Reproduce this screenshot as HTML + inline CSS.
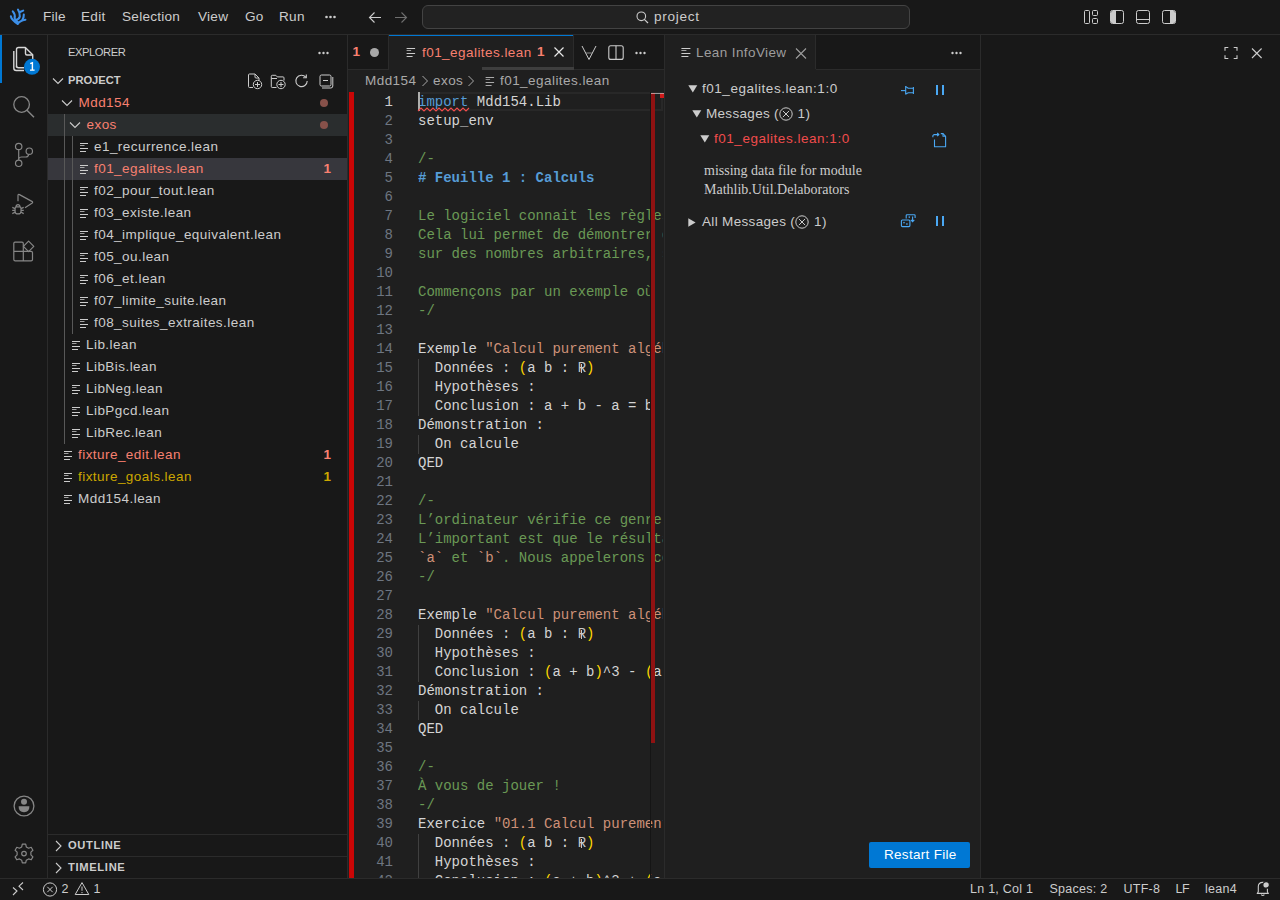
<!DOCTYPE html>
<html><head><meta charset="utf-8">
<style>
*{margin:0;padding:0;box-sizing:border-box}
html,body{width:1280px;height:900px;overflow:hidden;background:#181818;color:#cccccc;font-family:"Liberation Sans",sans-serif;font-size:13px}
.a{position:absolute}
.t{position:absolute;white-space:pre;line-height:1}
svg{position:absolute;overflow:visible}
.mono{font-family:"Liberation Mono",monospace;font-size:14px}
.ui{font-size:13.6px;letter-spacing:0.25px}

.code{position:absolute;left:418px;top:92.8px;width:244.5px;height:786px;overflow:hidden;font-family:"Liberation Mono",monospace;font-size:14px;line-height:19px;color:#d4d4d4;white-space:pre}
.code div{position:relative;height:19px}
.lnum{position:absolute;left:353px;top:92.8px;width:40px;text-align:right;font-family:"Liberation Mono",monospace;font-size:14px;line-height:19px;color:#6e7681}
.lnum .cur{color:#cccccc}
.c{color:#6a9955}.s{color:#ce9178}.k{color:#569cd6}.b{color:#ffd700}.h{color:#569cd6;font-weight:bold}
.rr{position:relative;color:#c8c8c8}
.rr::after{content:"";position:absolute;left:3.5px;top:4.1px;width:1px;height:9.1px;background:#c8c8c8}
.ig{position:absolute;left:0;top:0;width:1px;height:19px;background:#404040}
</style></head><body>
<!-- title bar -->
<div class="a" style="left:0;top:0;width:1280px;height:34px;background:#181818"></div>
<div class="a" style="left:0;top:34px;width:1280px;height:1px;background:#2b2b2b"></div>


<!-- title content -->
<svg style="left:0;top:0" width="40" height="34" viewBox="0 0 40 34">
 <g fill="none" stroke="#3d8fe8" stroke-width="2.1" stroke-linecap="round" stroke-linejoin="round">
  <path d="M10.9 16.4 C11.3 19.8 14.5 21.8 17.7 23.8"/>
  <path d="M17.7 23.8 C19 21.5 22 20.3 25.4 19.7"/>
  <path d="M12.8 11.4 C14.6 13.4 15.2 15.8 14.6 18.2 C14.8 20 16.5 21 17.7 22"/>
  <path d="M18 9.6 C19.4 11.5 20 14 19.8 16.5 C19.4 18.8 17.5 19.6 15.5 20.2"/>
  <path d="M20 12 L23.2 10.6"/>
  <path d="M23.8 14.6 C23.9 16.6 23.5 18.2 22.3 20"/>
 </g>
</svg>
<span class="t ui" style="left:43px;top:10px">File</span>
<span class="t ui" style="left:81px;top:10px">Edit</span>
<span class="t ui" style="left:122px;top:10px">Selection</span>
<span class="t ui" style="left:198px;top:10px">View</span>
<span class="t ui" style="left:245px;top:10px">Go</span>
<span class="t ui" style="left:279px;top:10px">Run</span>
<svg style="left:325px;top:15px" width="12" height="4"><circle cx="1.5" cy="2" r="1.3" fill="#ccc"/><circle cx="5.5" cy="2" r="1.3" fill="#ccc"/><circle cx="9.5" cy="2" r="1.3" fill="#ccc"/></svg>
<svg style="left:368px;top:11px" width="14" height="13" viewBox="0 0 14 13"><path d="M13 6.5H1.5M6.5 1.5L1.5 6.5L6.5 11.5" fill="none" stroke="#cccccc" stroke-width="1.1"/></svg>
<svg style="left:394px;top:11px" width="14" height="13" viewBox="0 0 14 13"><path d="M1 6.5H12.5M7.5 1.5L12.5 6.5L7.5 11.5" fill="none" stroke="#6f6f6f" stroke-width="1.1"/></svg>
<div class="a" style="left:422px;top:5px;width:488px;height:24px;border:1px solid #434343;border-radius:6px;background:#222222"></div>
<svg style="left:636px;top:11px" width="13" height="13" viewBox="0 0 13 13"><circle cx="5.3" cy="5.3" r="4.3" fill="none" stroke="#cccccc" stroke-width="1.1"/><path d="M8.3 8.3L12 12" stroke="#cccccc" stroke-width="1.2"/></svg>
<span class="t ui" style="left:654px;top:9.5px;letter-spacing:0.7px">project</span>
<svg style="left:1084px;top:10px" width="14" height="14" viewBox="0 0 14 14" fill="none" stroke="#cccccc" stroke-width="1"><rect x="0.5" y="0.5" width="5" height="13" rx="1"/><rect x="8.5" y="0.5" width="5" height="5" rx="1"/><rect x="8.5" y="8.5" width="5" height="5" rx="1"/></svg>
<svg style="left:1110px;top:10px" width="14" height="14" viewBox="0 0 14 14"><rect x="0.5" y="0.5" width="13" height="13" rx="2" fill="none" stroke="#cccccc"/><path d="M1 2.5 Q1 1 2.5 1 H6 V13 H2.5 Q1 13 1 11.5Z" fill="#cccccc"/></svg>
<svg style="left:1136px;top:10px" width="14" height="14" viewBox="0 0 14 14" fill="none" stroke="#cccccc"><rect x="0.5" y="0.5" width="13" height="13" rx="2"/><path d="M1 9.5H13"/></svg>
<svg style="left:1162px;top:10px" width="14" height="14" viewBox="0 0 14 14"><rect x="0.5" y="0.5" width="13" height="13" rx="2" fill="none" stroke="#cccccc"/><path d="M8 1 H11.5 Q13 1 13 2.5 V11.5 Q13 13 11.5 13 H8Z" fill="#cccccc"/></svg>

<!-- activity bar -->
<div class="a" style="left:0;top:35px;width:47px;height:843px;background:#181818"></div>
<div class="a" style="left:47px;top:35px;width:1px;height:843px;background:#2b2b2b"></div>
<div class="a" style="left:0;top:35px;width:2px;height:48px;background:#0078d4"></div>


<!-- activity icons -->
<svg style="left:0;top:35px" width="48" height="48" viewBox="0 35 48 48">
 <g fill="none" stroke="#d7d7d7" stroke-width="1.4" stroke-linejoin="round">
  <path d="M16.5 67.5 V49.5 Q16.5 47.5 18.5 47.5 H25.3 L32.7 54.8 V60"/>
  <path d="M25.5 47.8 V53.5 Q25.5 55 27 55 H32.5"/>
  <path d="M24 67.7 H18.5 Q16.5 67.7 16.5 65.7"/>
  <path d="M13.8 51 V68 Q13.8 70.5 16.3 70.5 H24"/>
 </g>
 <circle cx="32" cy="66.8" r="8" fill="#0078d4"/>
 <path d="M30.2 63.6 L32.4 62.8 V70 M30 70.1 H34.6" fill="none" stroke="#fff" stroke-width="1.4"/>
</svg>
<svg style="left:0;top:83px" width="48" height="48" viewBox="0 83 48 48" fill="none" stroke="#868686" stroke-width="1.3">
 <circle cx="21.6" cy="104.5" r="7.8"/>
 <path d="M26.5 109.8 L34 117.3" stroke-width="1.5"/>
</svg>
<svg style="left:0;top:131px" width="48" height="48" viewBox="0 131 48 48" fill="none" stroke="#868686" stroke-width="1.2">
 <circle cx="18.7" cy="146.5" r="3.2"/>
 <circle cx="29.3" cy="151.2" r="3.2"/>
 <circle cx="18.7" cy="163.3" r="3.2"/>
 <path d="M18.7 149.7 V160.1"/>
 <path d="M18.7 158.5 Q19.5 157 21.5 157 H26 Q28.3 157 28.8 154.4"/>
</svg>
<svg style="left:0;top:179px" width="48" height="48" viewBox="0 179 48 48" fill="none" stroke="#868686" stroke-width="1.2" stroke-linejoin="round">
 <path d="M18 201.3 V195.5 Q18 194 19.5 194.6 L32.3 201.6 Q33 202.4 32.3 203 L25 207.7"/>
 <path d="M15.1 213 V208.6 Q15.1 206.9 16.5 206.9 H19.6 Q21 206.9 21 208.6 V211.4 Q21 213.9 18 213.9 Q15.1 213.9 15.1 211.4Z"/>
 <path d="M16 206.9 Q16.2 204.6 18 204.6 Q19.8 204.6 20 206.9"/>
 <path d="M12.3 207.4 L15 208.6 M12.2 210.3 H15 M12.3 213.6 L15.2 212 M23.7 207.4 L21 208.6 M23.8 210.3 H21 M23.7 213.6 L20.8 212"/>
</svg>
<svg style="left:0;top:227px" width="48" height="48" viewBox="0 227 48 48" fill="none" stroke="#868686" stroke-width="1.2" stroke-linejoin="round">
 <path d="M23.3 251.4 V243.5 Q23.3 242.2 22 242.2 H15 Q13.8 242.2 13.8 243.5 V259.5 Q13.8 260.9 15.2 260.9 H31.1 Q32.5 260.9 32.5 259.5 V252.8 Q32.5 251.4 31.1 251.4 H13.8"/>
 <path d="M23.3 260.9 V251.4"/>
 <path d="M28.6 241.2 L33.8 246.4 L28.6 251.6 L23.4 246.4Z"/>
</svg>
<svg style="left:0;top:782px" width="48" height="48" viewBox="0 782 48 48">
 <circle cx="24" cy="806" r="9.9" fill="none" stroke="#868686" stroke-width="1.3"/>
 <circle cx="24" cy="801.7" r="3" fill="#868686"/>
 <path d="M18.6 806.3 H29.4 Q29.4 812.2 24 812.2 Q18.6 812.2 18.6 806.3Z" fill="#868686"/>
</svg>
<svg style="left:0;top:830px" width="48" height="48" viewBox="0 830 48 48" fill="none" stroke="#868686" stroke-width="1.2" stroke-linejoin="round">
 <path d="M22.3 844.2 H25.7 L26.3 846.9 L28.6 848.2 L31.2 847.3 L32.9 850.2 L30.9 852.1 V854.9 L32.9 856.9 L31.2 859.8 L28.6 858.9 L26.3 860.2 L25.7 862.9 H22.3 L21.7 860.2 L19.4 858.9 L16.8 859.8 L15.1 856.9 L17.1 854.9 V852.1 L15.1 850.2 L16.8 847.3 L19.4 848.2 L21.7 846.9Z"/>
 <circle cx="24" cy="853.6" r="2.3"/>
</svg>

<!-- sidebar -->
<div class="a" style="left:48px;top:35px;width:299px;height:843px;background:#181818"></div>
<div class="a" style="left:347px;top:35px;width:1px;height:843px;background:#2b2b2b"></div>

<!-- sidebar content -->
<span class="t" style="left:68px;top:46.5px;font-size:11.2px;letter-spacing:-0.45px;color:#cccccc">EXPLORER</span>
<svg style="left:318px;top:51px" width="12" height="4"><circle cx="1.5" cy="2" r="1.2" fill="#ccc"/><circle cx="5.5" cy="2" r="1.2" fill="#ccc"/><circle cx="9.5" cy="2" r="1.2" fill="#ccc"/></svg>
<svg style="left:52.3px;top:75.5px" width="12" height="10" viewBox="0 0 12 10"><path d="M1 2.5 L6 7.5 L11 2.5" fill="none" stroke="#cccccc" stroke-width="1.1"/></svg>
<span class="t" style="left:68px;top:74.5px;font-size:11.2px;font-weight:bold;letter-spacing:-0.05px;color:#cccccc">PROJECT</span>
<div class="a" style="left:48px;top:114px;width:299px;height:22px;background:#2a2d2e"></div>
<div class="a" style="left:48px;top:158px;width:299px;height:22px;background:#37373d"></div>
<div class="a" style="left:64px;top:114px;width:1px;height:330px;background:#585858"></div>
<div class="a" style="left:72px;top:136px;width:1px;height:198px;background:#585858"></div>
<svg style="left:61.2px;top:98.0px" width="12" height="10" viewBox="0 0 12 10"><path d="M1 2.5 L6 7.5 L11 2.5" fill="none" stroke="#cccccc" stroke-width="1.1"/></svg>
<span class="t" style="left:78.5px;top:95.6px;font-size:13.5px;letter-spacing:0.45px;color:#f88070">Mdd154</span>
<div class="a" style="left:320px;top:99px;width:8px;height:8px;border-radius:50%;background:#87514a"></div>
<svg style="left:69.2px;top:120.0px" width="12" height="10" viewBox="0 0 12 10"><path d="M1 2.5 L6 7.5 L11 2.5" fill="none" stroke="#cccccc" stroke-width="1.1"/></svg>
<span class="t" style="left:86.5px;top:117.6px;font-size:13.5px;letter-spacing:0.45px;color:#f88070">exos</span>
<div class="a" style="left:320px;top:121px;width:8px;height:8px;border-radius:50%;background:#87514a"></div>
<svg style="left:80px;top:136px" width="10" height="22" viewBox="0 0 10 22" fill="#cccccc"><rect x="0" y="7" width="8" height="1"/><rect x="0" y="9" width="4.5" height="1" opacity="0.75"/><rect x="0" y="12" width="8" height="1"/><rect x="0" y="15" width="6" height="1"/></svg>
<span class="t" style="left:94px;top:139.6px;font-size:13.5px;letter-spacing:0.45px;color:#cccccc">e1_recurrence.lean</span>
<svg style="left:80px;top:158px" width="10" height="22" viewBox="0 0 10 22" fill="#cccccc"><rect x="0" y="7" width="8" height="1"/><rect x="0" y="9" width="4.5" height="1" opacity="0.75"/><rect x="0" y="12" width="8" height="1"/><rect x="0" y="15" width="6" height="1"/></svg>
<span class="t" style="left:94px;top:161.6px;font-size:13.5px;letter-spacing:0.45px;color:#f88070">f01_egalites.lean</span>
<span class="t" style="left:323.5px;top:161.6px;font-size:13.5px;font-weight:bold;color:#f88070">1</span>
<svg style="left:80px;top:180px" width="10" height="22" viewBox="0 0 10 22" fill="#cccccc"><rect x="0" y="7" width="8" height="1"/><rect x="0" y="9" width="4.5" height="1" opacity="0.75"/><rect x="0" y="12" width="8" height="1"/><rect x="0" y="15" width="6" height="1"/></svg>
<span class="t" style="left:94px;top:183.6px;font-size:13.5px;letter-spacing:0.45px;color:#cccccc">f02_pour_tout.lean</span>
<svg style="left:80px;top:202px" width="10" height="22" viewBox="0 0 10 22" fill="#cccccc"><rect x="0" y="7" width="8" height="1"/><rect x="0" y="9" width="4.5" height="1" opacity="0.75"/><rect x="0" y="12" width="8" height="1"/><rect x="0" y="15" width="6" height="1"/></svg>
<span class="t" style="left:94px;top:205.6px;font-size:13.5px;letter-spacing:0.45px;color:#cccccc">f03_existe.lean</span>
<svg style="left:80px;top:224px" width="10" height="22" viewBox="0 0 10 22" fill="#cccccc"><rect x="0" y="7" width="8" height="1"/><rect x="0" y="9" width="4.5" height="1" opacity="0.75"/><rect x="0" y="12" width="8" height="1"/><rect x="0" y="15" width="6" height="1"/></svg>
<span class="t" style="left:94px;top:227.6px;font-size:13.5px;letter-spacing:0.45px;color:#cccccc">f04_implique_equivalent.lean</span>
<svg style="left:80px;top:246px" width="10" height="22" viewBox="0 0 10 22" fill="#cccccc"><rect x="0" y="7" width="8" height="1"/><rect x="0" y="9" width="4.5" height="1" opacity="0.75"/><rect x="0" y="12" width="8" height="1"/><rect x="0" y="15" width="6" height="1"/></svg>
<span class="t" style="left:94px;top:249.6px;font-size:13.5px;letter-spacing:0.45px;color:#cccccc">f05_ou.lean</span>
<svg style="left:80px;top:268px" width="10" height="22" viewBox="0 0 10 22" fill="#cccccc"><rect x="0" y="7" width="8" height="1"/><rect x="0" y="9" width="4.5" height="1" opacity="0.75"/><rect x="0" y="12" width="8" height="1"/><rect x="0" y="15" width="6" height="1"/></svg>
<span class="t" style="left:94px;top:271.6px;font-size:13.5px;letter-spacing:0.45px;color:#cccccc">f06_et.lean</span>
<svg style="left:80px;top:290px" width="10" height="22" viewBox="0 0 10 22" fill="#cccccc"><rect x="0" y="7" width="8" height="1"/><rect x="0" y="9" width="4.5" height="1" opacity="0.75"/><rect x="0" y="12" width="8" height="1"/><rect x="0" y="15" width="6" height="1"/></svg>
<span class="t" style="left:94px;top:293.6px;font-size:13.5px;letter-spacing:0.45px;color:#cccccc">f07_limite_suite.lean</span>
<svg style="left:80px;top:312px" width="10" height="22" viewBox="0 0 10 22" fill="#cccccc"><rect x="0" y="7" width="8" height="1"/><rect x="0" y="9" width="4.5" height="1" opacity="0.75"/><rect x="0" y="12" width="8" height="1"/><rect x="0" y="15" width="6" height="1"/></svg>
<span class="t" style="left:94px;top:315.6px;font-size:13.5px;letter-spacing:0.45px;color:#cccccc">f08_suites_extraites.lean</span>
<svg style="left:72px;top:334px" width="10" height="22" viewBox="0 0 10 22" fill="#cccccc"><rect x="0" y="7" width="8" height="1"/><rect x="0" y="9" width="4.5" height="1" opacity="0.75"/><rect x="0" y="12" width="8" height="1"/><rect x="0" y="15" width="6" height="1"/></svg>
<span class="t" style="left:86px;top:337.6px;font-size:13.5px;letter-spacing:0.45px;color:#cccccc">Lib.lean</span>
<svg style="left:72px;top:356px" width="10" height="22" viewBox="0 0 10 22" fill="#cccccc"><rect x="0" y="7" width="8" height="1"/><rect x="0" y="9" width="4.5" height="1" opacity="0.75"/><rect x="0" y="12" width="8" height="1"/><rect x="0" y="15" width="6" height="1"/></svg>
<span class="t" style="left:86px;top:359.6px;font-size:13.5px;letter-spacing:0.45px;color:#cccccc">LibBis.lean</span>
<svg style="left:72px;top:378px" width="10" height="22" viewBox="0 0 10 22" fill="#cccccc"><rect x="0" y="7" width="8" height="1"/><rect x="0" y="9" width="4.5" height="1" opacity="0.75"/><rect x="0" y="12" width="8" height="1"/><rect x="0" y="15" width="6" height="1"/></svg>
<span class="t" style="left:86px;top:381.6px;font-size:13.5px;letter-spacing:0.45px;color:#cccccc">LibNeg.lean</span>
<svg style="left:72px;top:400px" width="10" height="22" viewBox="0 0 10 22" fill="#cccccc"><rect x="0" y="7" width="8" height="1"/><rect x="0" y="9" width="4.5" height="1" opacity="0.75"/><rect x="0" y="12" width="8" height="1"/><rect x="0" y="15" width="6" height="1"/></svg>
<span class="t" style="left:86px;top:403.6px;font-size:13.5px;letter-spacing:0.45px;color:#cccccc">LibPgcd.lean</span>
<svg style="left:72px;top:422px" width="10" height="22" viewBox="0 0 10 22" fill="#cccccc"><rect x="0" y="7" width="8" height="1"/><rect x="0" y="9" width="4.5" height="1" opacity="0.75"/><rect x="0" y="12" width="8" height="1"/><rect x="0" y="15" width="6" height="1"/></svg>
<span class="t" style="left:86px;top:425.6px;font-size:13.5px;letter-spacing:0.45px;color:#cccccc">LibRec.lean</span>
<svg style="left:64px;top:444px" width="10" height="22" viewBox="0 0 10 22" fill="#cccccc"><rect x="0" y="7" width="8" height="1"/><rect x="0" y="9" width="4.5" height="1" opacity="0.75"/><rect x="0" y="12" width="8" height="1"/><rect x="0" y="15" width="6" height="1"/></svg>
<span class="t" style="left:78px;top:447.6px;font-size:13.5px;letter-spacing:0.45px;color:#f88070">fixture_edit.lean</span>
<span class="t" style="left:323.5px;top:447.6px;font-size:13.5px;font-weight:bold;color:#f88070">1</span>
<svg style="left:64px;top:466px" width="10" height="22" viewBox="0 0 10 22" fill="#cccccc"><rect x="0" y="7" width="8" height="1"/><rect x="0" y="9" width="4.5" height="1" opacity="0.75"/><rect x="0" y="12" width="8" height="1"/><rect x="0" y="15" width="6" height="1"/></svg>
<span class="t" style="left:78px;top:469.6px;font-size:13.5px;letter-spacing:0.45px;color:#cca700">fixture_goals.lean</span>
<span class="t" style="left:323.5px;top:469.6px;font-size:13.5px;font-weight:bold;color:#cca700">1</span>
<svg style="left:64px;top:488px" width="10" height="22" viewBox="0 0 10 22" fill="#cccccc"><rect x="0" y="7" width="8" height="1"/><rect x="0" y="9" width="4.5" height="1" opacity="0.75"/><rect x="0" y="12" width="8" height="1"/><rect x="0" y="15" width="6" height="1"/></svg>
<span class="t" style="left:78px;top:491.6px;font-size:13.5px;letter-spacing:0.45px;color:#cccccc">Mdd154.lean</span>
<svg style="left:246px;top:72px" width="18" height="18" viewBox="0 0 18 18" fill="none" stroke="#cccccc" stroke-width="1">
 <path d="M7 15.5 H3.5 Q2.5 15.5 2.5 14.5 V3 Q2.5 2 3.5 2 H9 L13 6 V8.5"/><path d="M9 2.2 V5 Q9 6 10 6 H12.8"/>
 <circle cx="11.5" cy="12.5" r="4.2" fill="#181818"/><path d="M11.5 10 V15 M9 12.5 H14"/></svg>
<svg style="left:269px;top:72px" width="18" height="18" viewBox="0 0 18 18" fill="none" stroke="#cccccc" stroke-width="1">
 <path d="M7.5 15.5 H3.2 Q2.3 15.5 2.3 14.5 V4.3 Q2.3 3.3 3.3 3.3 H6.8 L8.3 4.9 H14 Q15 4.9 15 5.9 V8.5"/><path d="M2.5 6.5 H8"/>
 <circle cx="12" cy="12.5" r="4.2" fill="#181818"/><path d="M12 10 V15 M9.5 12.5 H14.5"/></svg>
<svg style="left:292.5px;top:72px" width="18" height="18" viewBox="0 0 18 18" fill="none" stroke="#cccccc" stroke-width="1.1">
 <path d="M12.8 5.2 A5.7 5.7 0 1 0 14.2 9"/><path d="M13.3 2.6 V5.8 H10.1"/></svg>
<svg style="left:317.5px;top:72px" width="18" height="18" viewBox="0 0 18 18" fill="none" stroke="#cccccc" stroke-width="1">
 <rect x="2" y="3" width="11" height="11" rx="1.5"/><path d="M5 8.5 H10"/><path d="M4 16 H12.8 Q14.8 16 14.8 14 V5"/></svg>
<div class="a" style="left:48px;top:834px;width:299px;height:1px;background:#2b2b2b"></div>
<div class="a" style="left:48px;top:856px;width:299px;height:1px;background:#2b2b2b"></div>
<svg style="left:53px;top:840px" width="10" height="12" viewBox="0 0 10 12"><path d="M3 1 L8 6 L3 11" fill="none" stroke="#cccccc" stroke-width="1.1"/></svg>
<span class="t" style="left:68px;top:839.8px;font-size:11.2px;font-weight:bold;letter-spacing:0.62px;color:#cccccc">OUTLINE</span>
<svg style="left:53px;top:862px" width="10" height="12" viewBox="0 0 10 12"><path d="M3 1 L8 6 L3 11" fill="none" stroke="#cccccc" stroke-width="1.1"/></svg>
<span class="t" style="left:68px;top:861.8px;font-size:11.2px;font-weight:bold;letter-spacing:0.66px;color:#cccccc">TIMELINE</span>

<!-- editor group -->
<div class="a" style="left:348px;top:35px;width:316px;height:843px;background:#1f1f1f"></div>
<div class="a" style="left:348px;top:35px;width:316px;height:34px;background:#181818"></div>
<div class="a" style="left:348px;top:69px;width:316px;height:1px;background:#2b2b2b"></div>
<div class="a" style="left:664px;top:35px;width:1px;height:843px;background:#2b2b2b"></div>

<!-- editor content -->
<div class="a" style="left:388px;top:35px;width:1px;height:35px;background:#2b2b2b"></div>
<span class="t" style="left:352.5px;top:44.8px;font-size:13.5px;font-weight:bold;color:#f88070">1</span>
<div class="a" style="left:369.8px;top:48.3px;width:9px;height:9px;border-radius:50%;background:#a8a8a8"></div>
<div class="a" style="left:389px;top:35px;width:184px;height:35px;background:#1f1f1f"></div><div class="a" style="left:573px;top:35px;width:1px;height:35px;background:#2b2b2b"></div>
<div class="a" style="left:389px;top:35px;width:184px;height:1px;background:#0078d4"></div>
<svg style="left:406px;top:40px" width="10" height="22" viewBox="0 0 10 22" fill="#cccccc"><rect x="0.6" y="8" width="8.5" height="1"/><rect x="0.6" y="10" width="4.5" height="1" opacity="0.75"/><rect x="0.6" y="13" width="8.5" height="1"/><rect x="0.6" y="16" width="6" height="1"/></svg>
<span class="t" style="left:422px;top:46.4px;font-size:13.5px;letter-spacing:0.45px;color:#f88070">f01_egalites.lean</span>
<span class="t" style="left:537px;top:45.2px;font-size:13.5px;font-weight:bold;color:#f88070">1</span>
<svg style="left:553px;top:46px" width="12" height="12" viewBox="0 0 12 12"><path d="M1.5 1.5 L10.5 10.5 M10.5 1.5 L1.5 10.5" stroke="#e8e8e8" stroke-width="1.2"/></svg>
<div class="a" style="left:482px;top:67px;width:92px;height:3px;background:#3e3e3e"></div>
<svg style="left:581px;top:45px" width="16" height="16" viewBox="0 0 16 16" fill="none" stroke="#cccccc" stroke-width="1"><path d="M1 1 L8 14.5 L15 1"/><path d="M5.2 8 H10.8" stroke-width="1.1" stroke-opacity="0.6"/></svg>
<svg style="left:608px;top:45px" width="16" height="16" viewBox="0 0 16 16" fill="none" stroke="#cccccc" stroke-width="1.1"><rect x="0.8" y="0.8" width="14.4" height="13.6" rx="2"/><path d="M8 0.8 V14.4"/></svg>
<svg style="left:635px;top:51px" width="12" height="4"><circle cx="1.5" cy="2" r="1.2" fill="#ccc"/><circle cx="5.5" cy="2" r="1.2" fill="#ccc"/><circle cx="9.5" cy="2" r="1.2" fill="#ccc"/></svg>
<span class="t" style="left:365px;top:74px;font-size:13.5px;letter-spacing:0.45px;color:#a9a9a9">Mdd154</span>
<svg style="left:421px;top:74px" width="8" height="14" viewBox="0 0 8 14"><path d="M1.5 2 L6.5 7 L1.5 12" fill="none" stroke="#a9a9a9" stroke-width="1"/></svg>
<span class="t" style="left:433px;top:74px;font-size:13.5px;letter-spacing:0.45px;color:#a9a9a9">exos</span>
<svg style="left:467px;top:74px" width="8" height="14" viewBox="0 0 8 14"><path d="M1.5 2 L6.5 7 L1.5 12" fill="none" stroke="#a9a9a9" stroke-width="1"/></svg>
<svg style="left:485px;top:69px" width="10" height="22" viewBox="0 0 10 22" fill="#a9a9a9"><rect x="0.6" y="8" width="8.5" height="1"/><rect x="0.6" y="10" width="4.5" height="1" opacity="0.75"/><rect x="0.6" y="13" width="8.5" height="1"/><rect x="0.6" y="16" width="6" height="1"/></svg>
<span class="t" style="left:500px;top:74px;font-size:13.5px;letter-spacing:0.45px;color:#a9a9a9">f01_egalites.lean</span>
<div class="a" style="left:349px;top:92px;width:4.5px;height:786px;background:#ca0606"></div>


<!-- code -->
<div class="a" style="left:418px;top:92px;width:245px;height:19px;border:2px solid #282828"></div>
<div class="lnum"><div class="cur">1</div><div>2</div><div>3</div><div>4</div><div>5</div><div>6</div><div>7</div><div>8</div><div>9</div><div>10</div><div>11</div><div>12</div><div>13</div><div>14</div><div>15</div><div>16</div><div>17</div><div>18</div><div>19</div><div>20</div><div>21</div><div>22</div><div>23</div><div>24</div><div>25</div><div>26</div><div>27</div><div>28</div><div>29</div><div>30</div><div>31</div><div>32</div><div>33</div><div>34</div><div>35</div><div>36</div><div>37</div><div>38</div><div>39</div><div>40</div><div>41</div><div>42</div></div>
<div class="code"><div><span class="k">import</span> Mdd154.Lib</div><div>setup_env</div><div>&nbsp;</div><div><span class="c">/-</span></div><div><span class="h"># Feuille 1 : Calculs</span></div><div>&nbsp;</div><div><span class="c">Le logiciel connait les règles de calcul</span></div><div><span class="c">Cela lui permet de démontrer des égalités</span></div><div><span class="c">sur des nombres arbitraires, sans</span></div><div>&nbsp;</div><div><span class="c">Commençons par un exemple où la</span></div><div><span class="c">-/</span></div><div>&nbsp;</div><div>Exemple <span class="s">"Calcul purement algébrique"</span></div><div><span class="ig"></span>  Données : <span class="b">(</span>a b : <span class="rr">R</span><span class="b">)</span></div><div><span class="ig"></span>  Hypothèses :</div><div><span class="ig"></span>  Conclusion : a + b - a = b</div><div>Démonstration :</div><div><span class="ig"></span>  On calcule</div><div>QED</div><div>&nbsp;</div><div><span class="c">/-</span></div><div><span class="c">L’ordinateur vérifie ce genre de calcul</span></div><div><span class="c">L’important est que le résultat ne dépend</span></div><div><span class="s">`a`</span><span class="c"> et </span><span class="s">`b`</span><span class="c">. Nous appelerons ces</span></div><div><span class="c">-/</span></div><div>&nbsp;</div><div>Exemple <span class="s">"Calcul purement algébrique"</span></div><div><span class="ig"></span>  Données : <span class="b">(</span>a b : <span class="rr">R</span><span class="b">)</span></div><div><span class="ig"></span>  Hypothèses :</div><div><span class="ig"></span>  Conclusion : <span class="b">(</span>a + b<span class="b">)</span>^3 - <span class="b">(</span>a - b<span class="b">)</span>^3</div><div>Démonstration :</div><div><span class="ig"></span>  On calcule</div><div>QED</div><div>&nbsp;</div><div><span class="c">/-</span></div><div><span class="c">À vous de jouer !</span></div><div><span class="c">-/</span></div><div>Exercice <span class="s">"01.1 Calcul purement algébrique"</span></div><div><span class="ig"></span>  Données : <span class="b">(</span>a b : <span class="rr">R</span><span class="b">)</span></div><div><span class="ig"></span>  Hypothèses :</div><div><span class="ig"></span>  Conclusion : <span class="b">(</span>a + b<span class="b">)</span>^3 + <span class="b">(</span>a - b<span class="b">)</span>^3</div></div>
<div class="a" style="left:418px;top:92px;width:2px;height:19px;background:#aeafad"></div>
<svg style="left:418px;top:107px" width="52" height="5" viewBox="0 0 52 5"><path d="M0 4 L3.0 1 L6.0 4 L9.0 1 L12.0 4 L15.0 1 L18.0 4 L21.0 1 L24.0 4 L27.0 1 L30.0 4 L33.0 1 L36.0 4 L39.0 1 L42.0 4 L45.0 1 L48.0 4 L51.0 1" fill="none" stroke="#f14c4c" stroke-width="1.1"/></svg>
<div class="a" style="left:650px;top:92px;width:1px;height:786px;background:#151515"></div>
<div class="a" style="left:651px;top:93px;width:4px;height:650px;background:#8f1212"></div>
<div class="a" style="left:651px;top:93px;width:13px;height:1px;background:#9a9a9a"></div><div class="a" style="left:651px;top:93px;width:4px;height:1px;background:#c89090"></div><div class="a" style="left:660px;top:93px;width:4px;height:1px;background:#c89090"></div>
<div class="a" style="left:660px;top:94px;width:4px;height:4px;background:#cf1a1a"></div>

<!-- infoview group -->
<div class="a" style="left:665px;top:35px;width:315px;height:843px;background:#1f1f1f"></div>
<div class="a" style="left:665px;top:35px;width:315px;height:34px;background:#181818"></div>
<div class="a" style="left:665px;top:69px;width:315px;height:1px;background:#2b2b2b"></div>
<div class="a" style="left:980px;top:35px;width:1px;height:843px;background:#2b2b2b"></div>

<!-- right panel -->
<div class="a" style="left:981px;top:35px;width:299px;height:843px;background:#181818"></div>

<!-- status bar -->
<div class="a" style="left:0;top:878px;width:1280px;height:1px;background:#2b2b2b"></div>
<div class="a" style="left:0;top:879px;width:1280px;height:21px;background:#181818"></div>

<!-- infoview content -->
<div class="a" style="left:665px;top:35px;width:151px;height:34px;background:#1f1f1f"></div>
<div class="a" style="left:665px;top:69px;width:151px;height:1px;background:#1f1f1f"></div>
<div class="a" style="left:815px;top:35px;width:1px;height:34px;background:#2b2b2b"></div>
<svg style="left:681px;top:36px" width="10" height="22" viewBox="0 0 10 22" fill="#cccccc"><rect x="0.4" y="12" width="9" height="1"/><rect x="0.4" y="14" width="5" height="1" opacity="0.75"/><rect x="0.4" y="17" width="9" height="1"/><rect x="0.4" y="20" width="7" height="1"/></svg>
<span class="t" style="left:696px;top:46px;font-size:13.5px;letter-spacing:0.4px;color:#9d9d9d">Lean InfoView</span>
<svg style="left:795px;top:48px" width="12" height="11" viewBox="0 0 12 11"><path d="M1 0.5 L11 10.5 M11 0.5 L1 10.5" stroke="#9d9d9d" stroke-width="1.1"/></svg>
<svg style="left:951px;top:51px" width="12" height="4"><circle cx="1.5" cy="2" r="1.2" fill="#ccc"/><circle cx="5.5" cy="2" r="1.2" fill="#ccc"/><circle cx="9.5" cy="2" r="1.2" fill="#ccc"/></svg>
<svg style="left:687.5px;top:85px" width="10" height="8" viewBox="0 0 10 8"><path d="M0.3 0.3 H9.3 L4.8 7.6Z" fill="#cccccc"/></svg>
<span class="t" style="left:702px;top:81.6px;font-size:13.5px;letter-spacing:0.53px;color:#cccccc">f01_egalites.lean:1:0</span>
<svg style="left:691.5px;top:110px" width="10" height="8" viewBox="0 0 10 8"><path d="M0.3 0.3 H9.3 L4.8 7.6Z" fill="#cccccc"/></svg>
<span class="t" style="left:706px;top:107.3px;font-size:13.5px;letter-spacing:0.31px;color:#cccccc">Messages (</span>
<svg style="left:778.6px;top:107.2px" width="14" height="14" viewBox="0 0 14 14" fill="none" stroke="#cccccc" stroke-width="1"><circle cx="7" cy="7" r="6.2"/><path d="M3.9 3.9 L10.1 10.1 M10.1 3.9 L3.9 10.1"/></svg>
<span class="t" style="left:797.5px;top:107.3px;font-size:13.5px;letter-spacing:0.42px;color:#cccccc">1)</span>
<svg style="left:700px;top:135px" width="10" height="8" viewBox="0 0 10 8"><path d="M0.3 0.3 H9.3 L4.8 7.6Z" fill="#cccccc"/></svg>
<span class="t" style="left:714px;top:131.8px;font-size:13.5px;letter-spacing:0.53px;color:#f14c4c">f01_egalites.lean:1:0</span>
<span class="t" style="left:704px;top:163.5px;font-family:'Liberation Serif',serif;font-size:14px;color:#cccccc">missing data file for module</span>
<span class="t" style="left:704px;top:183.2px;font-family:'Liberation Serif',serif;font-size:14px;color:#cccccc">Mathlib.Util.Delaborators</span>
<svg style="left:688px;top:217.5px" width="8" height="10" viewBox="0 0 8 10"><path d="M0.3 0.3 L7.6 4.5 L0.3 8.7Z" fill="#cccccc"/></svg>
<span class="t" style="left:702px;top:214.8px;font-size:13.5px;letter-spacing:0.33px;color:#cccccc">All Messages (</span>
<svg style="left:794.9px;top:214.6px" width="14" height="14" viewBox="0 0 14 14" fill="none" stroke="#cccccc" stroke-width="1"><circle cx="7" cy="7" r="6.2"/><path d="M3.9 3.9 L10.1 10.1 M10.1 3.9 L3.9 10.1"/></svg>
<span class="t" style="left:814px;top:214.8px;font-size:13.5px;letter-spacing:0.42px;color:#cccccc">1)</span>
<svg style="left:900px;top:84px" width="16" height="12" viewBox="0 0 16 12" fill="none" stroke="#4aa8f4" stroke-width="1.1" stroke-linejoin="round"><path d="M1 6.6 H5.7"/><path d="M5.7 2.1 V10.6"/><path d="M5.7 2.6 L8.3 4.3 H13.4 M5.7 10.1 L8.3 8.8 H13.4"/><path d="M13.4 3 V10.1"/></svg>
<div class="a" style="left:936px;top:85px;width:2.2px;height:10px;background:#4aa8f4"></div>
<div class="a" style="left:941.9px;top:85px;width:2.2px;height:10px;background:#4aa8f4"></div>
<div class="a" style="left:936px;top:216px;width:2.2px;height:10.3px;background:#4aa8f4"></div>
<div class="a" style="left:941.9px;top:216px;width:2.2px;height:10.3px;background:#4aa8f4"></div>
<svg style="left:931px;top:132px" width="16" height="16" viewBox="0 0 16 16" fill="none" stroke="#4aa8f4" stroke-width="1.1" stroke-linejoin="round"><path d="M3.5 7.5 V14.8 H14.6 V4.3 L12 1.6 H9.8"/><path d="M12 1.6 V4.3 H14.6"/><path d="M2.2 5.3 Q1 3.5 3.2 2.6 H7.8 M6.2 1 L7.9 2.6 L6.2 4.2"/></svg>
<svg style="left:900px;top:214px" width="17" height="14" viewBox="0 0 17 14" fill="none" stroke="#4aa8f4" stroke-width="1.1"><rect x="1.4" y="6" width="8.5" height="6.6" rx="1"/><path d="M6.2 4.6 V1.5 Q6.2 0.8 7 0.8 H14.3 Q15.1 0.8 15.1 1.6 V4"/><path d="M12.6 2.5 V7.5 M10.9 5.8 L12.6 7.6 L14.3 5.8"/><rect x="3.3" y="7.9" width="1.4" height="1.4" fill="#4aa8f4" stroke="none"/><rect x="6.2" y="9.3" width="1.4" height="1.4" fill="#4aa8f4" stroke="none"/><rect x="8.6" y="2.4" width="1.4" height="1.4" fill="#4aa8f4" stroke="none"/></svg>
<div class="a" style="left:869px;top:842px;width:101px;height:26px;border-radius:2px;background:#0078d4"></div>
<span class="t" style="left:884px;top:847.8px;font-size:13.5px;letter-spacing:0.3px;color:#ffffff">Restart File</span>
<svg style="left:1224px;top:46px" width="14" height="14" viewBox="0 0 14 14" fill="none" stroke="#cccccc" stroke-width="1.1"><path d="M1 4.8 V1.5 H4.3 M9.7 1.5 H13 V4.8 M13 9.2 V12.5 H9.7 M4.3 12.5 H1 V9.2"/></svg>
<svg style="left:1251px;top:48px" width="12" height="11" viewBox="0 0 12 11"><path d="M1 0.5 L10.6 10 M10.6 0.5 L1 10" stroke="#cccccc" stroke-width="1.1"/></svg>
<!-- status -->
<svg style="left:12px;top:882px" width="12" height="14" viewBox="0 0 12 14" fill="none" stroke="#cccccc" stroke-width="1.1"><path d="M1 5.5 L5 9 L1 13 M11 0.5 L7 4.2 L11 8"/></svg>
<svg style="left:42px;top:881.5px" width="16" height="15" viewBox="0 0 16 15" fill="none" stroke="#cccccc" stroke-width="1"><circle cx="8" cy="7.5" r="6.6"/><path d="M5.3 4.8 L10.7 10.2 M10.7 4.8 L5.3 10.2"/></svg>
<span class="t" style="left:61.5px;top:882.6px;font-size:12.5px;color:#cccccc">2</span>
<svg style="left:73.5px;top:882px" width="16" height="14" viewBox="0 0 16 14" fill="none" stroke="#cccccc" stroke-width="1" stroke-linejoin="round"><path d="M8 0.6 L14.8 12.5 H1.2Z"/><path d="M8 4.5 V8.8 M8 10 V11.2"/></svg>
<span class="t" style="left:93.5px;top:882.6px;font-size:12.5px;color:#cccccc">1</span>
<span class="t" style="left:970px;top:882.6px;font-size:12.5px;letter-spacing:0.25px;color:#cccccc">Ln 1, Col 1</span>
<span class="t" style="left:1049.5px;top:882.6px;font-size:12.5px;letter-spacing:0.25px;color:#cccccc">Spaces: 2</span>
<span class="t" style="left:1123.5px;top:882.6px;font-size:12.5px;letter-spacing:0.25px;color:#cccccc">UTF-8</span>
<span class="t" style="left:1175.5px;top:882.6px;font-size:12.5px;letter-spacing:-0.5px;color:#cccccc">LF</span>
<span class="t" style="left:1205px;top:882.6px;font-size:12.5px;letter-spacing:0.25px;color:#cccccc">lean4</span>
<svg style="left:1254px;top:880px" width="18" height="17" viewBox="0 0 18 17" fill="none" stroke="#cccccc" stroke-width="1.1"><path d="M3.4 13.4 H14.2 L13.4 11.6 V6.6 Q13.4 2.4 8.8 2.4 Q4.3 2.4 4.3 6.6 V11.6Z"/><path d="M7.2 14.6 Q8.8 16.4 10.4 14.6"/><circle cx="12.1" cy="4.9" r="3.3" fill="#cccccc" stroke="#181818" stroke-width="1.2"/></svg>
</body></html>
